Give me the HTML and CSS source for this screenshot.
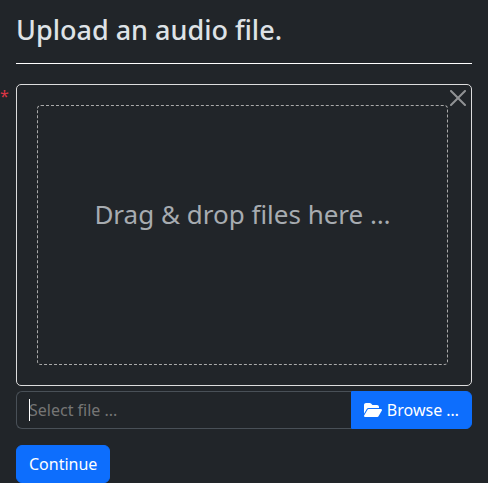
FILE: index.html
```
<!DOCTYPE html>
<html lang="en">
<head>
<meta charset="utf-8">
<meta name="viewport" content="width=device-width, initial-scale=1">
<title>Upload an audio file.</title>
<link rel="stylesheet" href="styles.css">
</head>
<body>
<main class="page">
  <h1 class="title">Upload an audio file.</h1>
  <hr class="rule">
  <form class="upload">
    <span class="required">*</span>
    <div class="preview">
      <button class="close" type="button" aria-label="Close">
        <svg viewBox="0 0 16 16" width="16" height="16" aria-hidden="true"><path d="M.293.293a1 1 0 0 1 1.414 0L8 6.586 14.293.293a1 1 0 1 1 1.414 1.414L9.414 8l6.293 6.293a1 1 0 0 1-1.414 1.414L8 9.414l-6.293 6.293a1 1 0 0 1-1.414-1.414L6.586 8 .293 1.707a1 1 0 0 1 0-1.414z"/></svg>
      </button>
      <div class="drop-zone">Drag &amp; drop files here …</div>
    </div>
    <div class="input-group">
      <div class="caption">
        <input class="caption-input" type="text" placeholder="Select file ..." aria-label="Select file">
        <span class="caret"></span>
      </div>
      <button class="btn browse" type="button">
        <svg class="folder" viewBox="0 0 576 512" width="18" height="16" aria-hidden="true"><path d="M88.700 223.800L0 375.800V96C0 60.700 28.700 32 64 32H181.500c17 0 33.300 6.700 45.300 18.700l26.500 26.500c12 12 28.300 18.700 45.300 18.700H416c35.300 0 64 28.700 64 64v32H144c-22.800 0-43.800 12.100-55.300 31.800zm27.600 16.100C122.100 230 132.600 224 144 224H544c11.500 0 22 6.100 27.700 16.100s5.700 22.200-.1 32.100l-112 192C453.900 474 443.400 480 432 480H32c-11.500 0-22-6.100-27.700-16.100s-5.700-22.200 .1-32.100l112-192z"/></svg>
        <span>Browse …</span>
      </button>
    </div>
    <button class="btn continue" type="submit">Continue</button>
  </form>
</main>
</body>
</html>
```
FILE: styles.css
```
*, *::before, *::after {
  box-sizing: border-box;
}

body {
  margin: 0;
  background: #212529;
  color: #dee2e6;
  font-family: "Noto Sans", "Liberation Sans", sans-serif;
  font-size: 16px;
  line-height: 24px;
}

.page {
  padding: 13px 16px 0;
}

.title {
  margin: 0;
  font-size: 27px;
  font-weight: 500;
  line-height: 34px;
}

.rule {
  margin: 16px 0 20px;
  border: 0;
  border-top: 1px solid #fff;
}

.upload {
  position: relative;
}

.required {
  position: absolute;
  top: 0;
  left: -16px;
  color: #dc3545;
}

.preview {
  position: relative;
  margin-bottom: 5px;
  padding: 20px 23px 20px 20px;
  border: 1px solid #ddd;
  border-radius: 5px;
}

.close {
  position: absolute;
  top: 5px;
  right: 5px;
  display: block;
  padding: 0;
  border: 0;
  background: none;
  line-height: 0;
  fill: #fff;
  opacity: 0.5;
}

.drop-zone {
  height: 260px;
  padding: 90px 20px;
  border: 1px dashed #aaa;
  border-radius: 4px;
  color: #a7acb1;
  font-size: 26px;
  line-height: 36px;
  text-align: center;
}

.input-group {
  display: flex;
  margin-bottom: 16px;
}

.caption {
  position: relative;
  flex: 1;
  min-width: 0;
}

.caption-input {
  display: block;
  width: 100%;
  height: 38px;
  padding: 6px 12px;
  border: 1px solid #495057;
  border-right: 0;
  border-radius: 6px 0 0 6px;
  outline: 0;
  background: #212529;
  color: #dee2e6;
  font: inherit;
}

.caption-input::placeholder {
  color: #757575;
  opacity: 1;
}

.caret {
  position: absolute;
  top: 8px;
  left: 13px;
  width: 1px;
  height: 22px;
  background: #fff;
}

.btn {
  padding: 6px 12px;
  border: 1px solid #0d6efd;
  border-radius: 6px;
  background: #0d6efd;
  color: #fff;
  font: inherit;
}

.browse {
  display: flex;
  align-items: center;
  gap: 5px;
  border-radius: 0 6px 6px 0;
}

.folder {
  fill: #fff;
}

.continue {
  display: block;
}
```
